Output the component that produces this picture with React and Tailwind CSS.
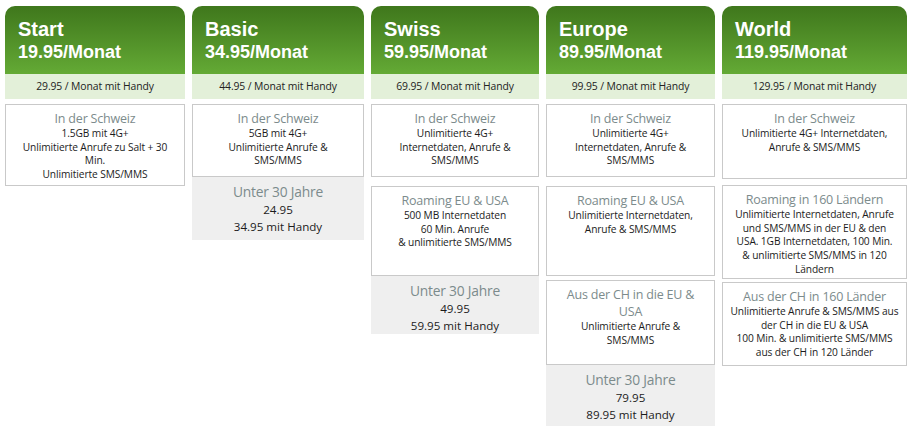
import React from 'react';

const plans = [
  {
    name: 'Start',
    price: '19.95/Monat',
    handy: '29.95 / Monat mit Handy',
    width: 'w-[180px]',
    boxes: [
      {
        title: ['In der Schweiz'],
        lines: ['1.5GB mit 4G+', 'Unlimitierte Anrufe zu Salt + 30', 'Min.', 'Unlimitierte SMS/MMS'],
        h: 'h-[82px]',
      },
    ],
  },
  {
    name: 'Basic',
    price: '34.95/Monat',
    handy: '44.95 / Monat mit Handy',
    width: 'w-[172px]',
    boxes: [
      {
        title: ['In der Schweiz'],
        lines: ['5GB mit 4G+', 'Unlimitierte Anrufe &', 'SMS/MMS'],
        h: 'h-[73px]',
      },
    ],
    young: { price: '24.95', handy: '34.95 mit Handy', h: 'h-[63px]' },
  },
  {
    name: 'Swiss',
    price: '59.95/Monat',
    handy: '69.95 / Monat mit Handy',
    width: 'w-[168px]',
    boxes: [
      {
        title: ['In der Schweiz'],
        lines: ['Unlimitierte 4G+', 'Internetdaten, Anrufe &', 'SMS/MMS'],
        h: 'h-[73px]',
      },
      {
        title: ['Roaming EU & USA'],
        lines: ['500 MB Internetdaten', '60 Min. Anrufe', '& unlimitierte SMS/MMS'],
        h: 'h-[90px]',
        gap: 'mt-[9px]',
      },
    ],
    young: { price: '49.95', handy: '59.95 mit Handy', h: 'h-[58px]' },
  },
  {
    name: 'Europe',
    price: '89.95/Monat',
    handy: '99.95 / Monat mit Handy',
    width: 'w-[169px]',
    boxes: [
      {
        title: ['In der Schweiz'],
        lines: ['Unlimitierte 4G+', 'Internetdaten, Anrufe &', 'SMS/MMS'],
        h: 'h-[73px]',
      },
      {
        title: ['Roaming EU & USA'],
        lines: ['Unlimitierte Internetdaten,', 'Anrufe & SMS/MMS'],
        h: 'h-[90px]',
        gap: 'mt-[9px]',
      },
      {
        title: ['Aus der CH in die EU &', 'USA'],
        lines: ['Unlimitierte Anrufe &', 'SMS/MMS'],
        h: 'h-[85px]',
        gap: 'mt-[4px]',
      },
    ],
    young: { price: '79.95', handy: '89.95 mit Handy', h: 'h-[61px]' },
  },
  {
    name: 'World',
    price: '119.95/Monat',
    handy: '129.95 / Monat mit Handy',
    width: 'w-[185px]',
    boxes: [
      {
        title: ['In der Schweiz'],
        lines: ['Unlimitierte 4G+ Internetdaten,', 'Anrufe & SMS/MMS'],
        h: 'h-[75px]',
      },
      {
        title: ['Roaming in 160 Ländern'],
        lines: [
          'Unlimitierte Internetdaten, Anrufe',
          'und SMS/MMS in der EU & den',
          'USA. 1GB Internetdaten, 100 Min.',
          '& unlimitierte SMS/MMS in 120',
          'Ländern',
        ],
        h: 'h-[94px]',
        gap: 'mt-[6px]',
      },
      {
        title: ['Aus der CH in 160 Länder'],
        lines: [
          'Unlimitierte Anrufe & SMS/MMS aus',
          'der CH in die EU & USA',
          '100 Min. & unlimitierte SMS/MMS',
          'aus der CH in 120 Länder',
        ],
        h: 'h-[84px]',
        gap: 'mt-[3px]',
      },
    ],
  },
];

const body = { fontFamily: '"Open Sans", "Noto Sans", sans-serif' };

function InfoBox({ box }) {
  return (
    <div
      className={`${box.h} ${box.gap || ''} border border-[#c9c9c9] bg-white flex flex-col items-center pt-[5px] text-center`}
      style={body}
    >
      {box.title.map((t) => (
        <div key={t} className="text-[12.5px] leading-[17px] text-[#7c8b8c] whitespace-nowrap tracking-[-0.2px]">
          {t}
        </div>
      ))}
      {box.lines.map((l, i) => (
        <div key={i} className="text-[10.2px] leading-[13.7px] text-[#1c1c1c] whitespace-nowrap tracking-[-0.1px]">
          {l}
        </div>
      ))}
    </div>
  );
}

function PlanColumn({ plan }) {
  return (
    <div className={`${plan.width} shrink-0 flex flex-col`}>
      <div
        className="h-[68px] rounded-t-[10px] bg-gradient-to-b from-[#3f771c] to-[#64aa35] pl-[13px] pt-[11px] text-white font-bold"
        style={{ fontFamily: '"Liberation Sans", Arial, sans-serif' }}
      >
        <div className="text-[20px] leading-[24px]">{plan.name}</div>
        <div className="text-[18px] leading-[22px]">{plan.price}</div>
      </div>
      <div
        className="h-[25px] bg-[#e3f0d9] flex items-center justify-center text-[10.4px] text-[#222] tracking-[-0.1px]"
        style={body}
      >
        {plan.handy}
      </div>
      <div className="mt-[5px] flex flex-col">
        {plan.boxes.map((b, i) => (
          <InfoBox key={i} box={b} />
        ))}
        {plan.young && (
          <div className={`${plan.young.h} bg-[#efefef] flex flex-col items-center pt-[6px] text-center`} style={body}>
            <div className="text-[13.8px] leading-[18px] text-[#7c8b8c] tracking-[-0.2px]">Unter 30 Jahre</div>
            <div className="text-[11.6px] leading-[17px] text-[#1c1c1c]">{plan.young.price}</div>
            <div className="text-[11.6px] leading-[17px] text-[#1c1c1c]">{plan.young.handy}</div>
          </div>
        )}
      </div>
    </div>
  );
}

export default function App() {
  return (
    <div className="w-[915px] h-[434px] bg-white overflow-hidden">
      <div className="flex gap-[7px] pl-[5px] pt-[6px]">
        {plans.map((p) => (
          <PlanColumn key={p.name} plan={p} />
        ))}
      </div>
    </div>
  );
}
